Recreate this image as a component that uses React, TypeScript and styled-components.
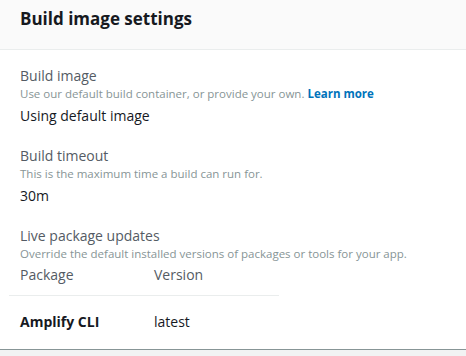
import styled, { createGlobalStyle } from "styled-components";

const GlobalStyle = createGlobalStyle`
    html, body {
        margin: 0;
        padding: 0;
        background: #f2f3f3;
    }
    body {
        font-family: "Open Sans", "Noto Sans", sans-serif;
    }
`;

const Card = styled.div`
    width: 466px;
    height: 350px;
    box-sizing: border-box;
    background: #ffffff;
    border-bottom: 1px solid #879596;
    display: flex;
    flex-direction: column;
`;

const Header = styled.div`
    flex-shrink: 0;
    height: 50px;
    box-sizing: border-box;
    background: #fafafa;
    border-bottom: 1px solid #eaeded;
    padding: 8px 20px 0;
`;

const Title = styled.h2`
    margin: 0;
    font-size: 17px;
    line-height: 22px;
    font-weight: 700;
    color: #16191f;
`;

const Body = styled.div`
    padding: 16px 20px 0;
    display: flex;
    flex-direction: column;
    gap: 20px;
`;

const Field = styled.div`
    display: flex;
    flex-direction: column;
`;

const Label = styled.div`
    font-size: 14px;
    line-height: 20px;
    color: #545b64;
`;

const Description = styled.div`
    font-size: 11.5px;
    line-height: 16px;
    color: #879596;
`;

const LearnMore = styled.a`
    color: #0073bb;
    font-weight: 700;
    text-decoration: none;
`;

const Value = styled.div`
    font-size: 14px;
    line-height: 20px;
    color: #16191f;
    margin-top: 4px;
`;

const Table = styled.div`
    margin-left: -11px;
    width: 270px;
`;

const Row = styled.div<{ $head?: boolean }>`
    display: grid;
    grid-template-columns: 134px 1fr;
    padding: ${(p) => (p.$head ? "3px 11px 10px" : "16px 11px")};
    border-bottom: ${(p) => (p.$head ? "1px solid #eaeded" : "none")};
    font-size: 14px;
    line-height: 20px;
    color: ${(p) => (p.$head ? "#545b64" : "#16191f")};
`;

const Cell = styled.span<{ $bold?: boolean }>`
    font-weight: ${(p) => (p.$bold ? 700 : 400)};
`;

export default function App() {
    return (
        <>
            <GlobalStyle />
            <Card>
                <Header>
                    <Title>Build image settings</Title>
                </Header>
                <Body>
                    <Field>
                        <Label>Build image</Label>
                        <Description>
                            Use our default build container, or provide your own.{" "}
                            <LearnMore href="#">Learn more</LearnMore>
                        </Description>
                        <Value>Using default image</Value>
                    </Field>
                    <Field>
                        <Label>Build timeout</Label>
                        <Description>This is the maximum time a build can run for.</Description>
                        <Value>30m</Value>
                    </Field>
                    <Field>
                        <Label>Live package updates</Label>
                        <Description>
                            Override the default installed versions of packages or tools for your app.
                        </Description>
                        <Table>
                            <Row $head>
                                <Cell>Package</Cell>
                                <Cell>Version</Cell>
                            </Row>
                            <Row>
                                <Cell $bold>Amplify CLI</Cell>
                                <Cell>latest</Cell>
                            </Row>
                        </Table>
                    </Field>
                </Body>
            </Card>
        </>
    );
}
